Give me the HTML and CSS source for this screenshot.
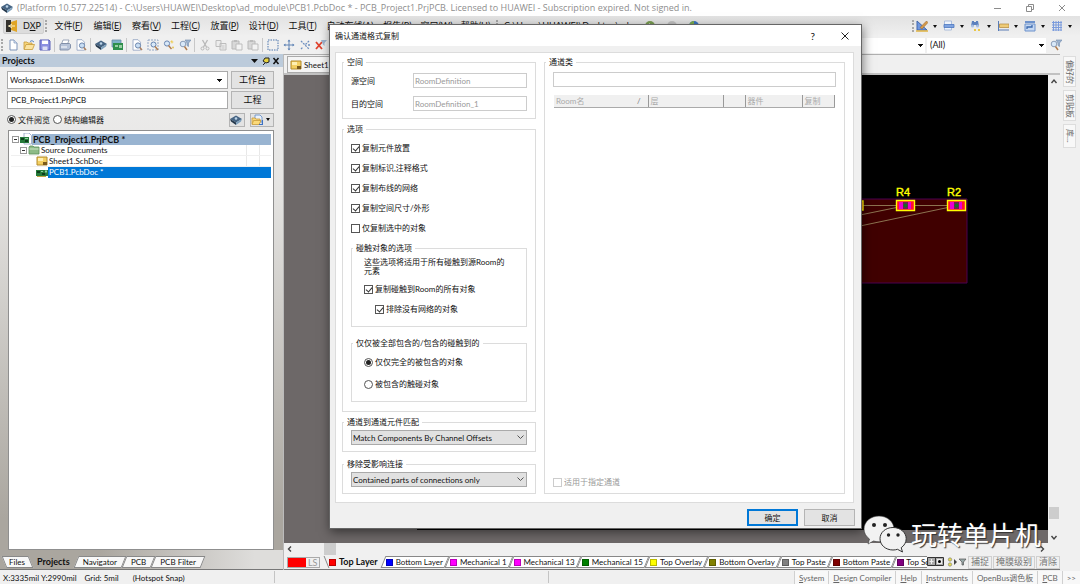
FILE: index.html
```
<!DOCTYPE html>
<html lang="zh-CN">
<head>
<meta charset="utf-8">
<title>PCB_Project1.PrjPCB</title>
<link rel="stylesheet" href="styles.css">
</head>
<body>
<svg class="defs" aria-hidden="true">
  <symbol id="i-new" viewBox="0 0 12 12"><path d="M3 1h4l3 3v7H3z" fill="#fff" stroke="#7c93b8"/><path d="M7 1v3h3" fill="#dbe6f5" stroke="#7c93b8" stroke-width=".7"/></symbol>
  <symbol id="i-open" viewBox="0 0 12 12"><path d="M1 10V3h3l1 1h4v2" fill="#f7d67c" stroke="#c79a3a" stroke-width=".8"/><path d="M1 10.500l2-5h8.500l-2 5z" fill="#fbe3a0" stroke="#c79a3a" stroke-width=".8"/><path d="M7 2.500q2-2 4 .5" fill="none" stroke="#5c88c4"/></symbol>
  <symbol id="i-workopen" viewBox="0 0 12 12"><path d="M4 1h5l2 2v5H4z" fill="#eaf1fb" stroke="#5c88c4" stroke-width=".8"/><path d="M1 10V4h3l1 1h4v2" fill="#f7d67c" stroke="#c79a3a" stroke-width=".8"/><path d="M1 10.500l1.500-4H10l-2 4z" fill="#fbd978" stroke="#c79a3a" stroke-width=".8"/><path d="M8 10.500h3.500V6" fill="none" stroke="#3c71c4" stroke-width="1.200"/></symbol>
  <symbol id="i-save" viewBox="0 0 12 12"><path d="M1 1h9l1 1v9H1z" fill="#8a8fe0" stroke="#5a60b8"/><path d="M3 1.500h6v3.500H3z" fill="#fff"/><path d="M3.500 7.500h5V11h-5z" fill="#dcdff5"/></symbol>
  <symbol id="i-print" viewBox="0 0 12 12"><path d="M4 1h6L8.500 5h-6z" fill="#fff" stroke="#8593ab" stroke-width=".8"/><path d="M1 5.500l1.500-1h8l1 1V9l-2 2H1z" fill="#b5c2d8" stroke="#71809c" stroke-width=".8"/><path d="M2 8h6" stroke="#fff"/></symbol>
  <symbol id="i-prev" viewBox="0 0 12 12"><path d="M2 .7h5l2.500 2.500v8H2z" fill="#fff" stroke="#8ea0bf" stroke-width=".8"/><circle cx="7" cy="6.500" r="2.600" fill="#c8ddf3" stroke="#6d87ad"/><path d="M8.800 8.500l2.200 2.500" stroke="#ad8260" stroke-width="1.500"/></symbol>
  <symbol id="i-chip" viewBox="0 0 12 12"><path d="M0 5l6-3.500L12 5 6 8.500z" fill="#466483"/><path d="M0 5l6 3.500V11L1 7.500z" fill="#24384c"/><path d="M6 8.500L12 5l-1 2.500L6 11z" fill="#7fa1bd"/><circle cx="6" cy="4.500" r="1.300" fill="#bcd4e8"/></symbol>
  <symbol id="i-board" viewBox="0 0 12 12"><path d="M1 1h9v7H1z" fill="#7fb3c9" stroke="#6b8aa5" stroke-width=".8"/><path d="M2 4h10v7H2z" fill="#2f8f4c"/><path d="M4 6h3v2H4zM8 6h3v3H8z" fill="#9ad0a4"/></symbol>
  <symbol id="i-zsel" viewBox="0 0 12 12"><path d="M1 1h10v10H1z" fill="none" stroke="#93a6c4" stroke-dasharray="2 1"/><circle cx="6.500" cy="5.500" r="2.500" fill="#d8e8f8" stroke="#6483b0"/><path d="M8 7.500L11 11" stroke="#b07d4f" stroke-width="1.500"/></symbol>
  <symbol id="i-zoom" viewBox="0 0 12 12"><circle cx="4" cy="4.500" r="2.600" fill="#d8e8f8" stroke="#6a87b2"/><path d="M5.500 6.500L8.500 10" stroke="#b07d4f" stroke-width="1.500"/><path d="M9 1l.6 1.400L11 3l-1.400.6L9 5l-.6-1.400L7 3z" fill="#edcd58"/><circle cx="10" cy="8.500" r="1" fill="#e5c557"/></symbol>
  <symbol id="i-filt" viewBox="0 0 12 12"><circle cx="4" cy="5" r="2.800" fill="#d8e8f8" stroke="#8a9db9"/><path d="M5.500 7.500L8 11" stroke="#b07d4f" stroke-width="1.500"/><path d="M6 1h6L9.500 4v3.500L8 6.500V4z" fill="#9eb4cf" stroke="#6e89ad" stroke-width=".6"/></symbol>
  <symbol id="i-cut" viewBox="0 0 12 12"><path d="M3.500 1l4 7M8.500 1l-4 7" stroke="#b8b8b8" stroke-width="1.300"/><circle cx="3.500" cy="9.500" r="1.500" fill="none" stroke="#b8b8b8"/><circle cx="8.500" cy="9.500" r="1.500" fill="none" stroke="#b8b8b8"/></symbol>
  <symbol id="i-copy" viewBox="0 0 12 12"><path d="M1 1.500h5v6H1zM5 4.500h6v6.500H5z" fill="#ececec" stroke="#bdbdbd"/><path d="M6.500 7h3M6.500 9h3" stroke="#c6c6c6"/></symbol>
  <symbol id="i-paste" viewBox="0 0 12 12"><path d="M1 2h7v8H1z" fill="#d8d8d8" stroke="#b8b8b8"/><path d="M3 1h3v2H3z" fill="#bbb"/><path d="M5 5h6v6H5z" fill="#f3f3f3" stroke="#bdbdbd"/></symbol>
  <symbol id="i-marq" viewBox="0 0 12 12"><path d="M1 1h10v10H1z" fill="none" stroke="#4d76ad" stroke-dasharray="1.500 1"/></symbol>
  <symbol id="i-move" viewBox="0 0 12 12"><path d="M6 1v10M1 6h10" stroke="#6285b6"/><path d="M4.500 2.500L6 .5l1.500 2zM4.500 9.500l1.500 2 1.500-2zM2.500 4.500L.5 6l2 1.500zM9.500 4.500l2 1.500-2 1.500z" fill="#6285b6"/></symbol>
  <symbol id="i-wand" viewBox="0 0 12 12"><path d="M2 2l8 8M10 2L6 6M2 10l2-2" stroke="#6d8fc0" stroke-width="1.300" stroke-dasharray="2 1"/><circle cx="10" cy="6" r="1" fill="#6d8fc0"/></symbol>
  <symbol id="i-clear" viewBox="0 0 12 12"><path d="M1 3l6 7M7 3l-6 7" stroke="#e0422e" stroke-width="1.800"/><path d="M6 1h6L9.500 4v3L8 5.500z" fill="#9eb4cf"/></symbol>
  <symbol id="i-sch" viewBox="0 0 12 12"><path d="M1 2h10v8H1z" fill="#f3cf62" stroke="#b38a2b"/><path d="M2 3h5v3H2z" fill="#fff0b2"/><path d="M7 7h4v3H7z" fill="#7a5a1b"/></symbol>
  <symbol id="i-pcb" viewBox="0 0 12 12"><path d="M0 3h12v6H0z" fill="#257a3a"/><path d="M1 4h3v2H1zM6 6h3v2H6z" fill="#0e3d1c"/><path d="M5 4h2v1H5zM9 3.500h2v2H9z" fill="#8dd29c"/><path d="M1 9h9v1H1z" fill="#c0a343"/></symbol>
  <symbol id="i-proj" viewBox="0 0 12 12"><path d="M4 0h5l2.500 2.500V11H4z" fill="#fff" stroke="#8ea0bf" stroke-width=".8"/><path d="M0 4h9v6H0z" fill="#257a3a"/><path d="M1 5h3v2H1zM5 7h3v2H5z" fill="#0e3d1c"/><path d="M5 5h3v1H5z" fill="#8dd29c"/></symbol>
  <symbol id="i-fold" viewBox="0 0 12 12"><path d="M1 3l1-1h3l1 1h5v7H1z" fill="#8dbb87" stroke="#5b8f58" stroke-width=".8"/><path d="M1.500 5h9" stroke="#cfe8c9"/></symbol>
  <symbol id="i-draw" viewBox="0 0 12 12"><path d="M1 1v9h10z" fill="#6f98e0" stroke="#4067ac"/><path d="M4 7.500L10.500 1 12 2.500 6 9z" fill="#d69a4a" stroke="#8e5e25" stroke-width=".5"/><path d="M0 11h12" stroke="#e0b340" stroke-width="1.500"/></symbol>
  <symbol id="i-align" viewBox="0 0 12 12"><path d="M1.500 1h7v9h-7z" fill="#eef3fb" stroke="#9db3d8" stroke-width=".8"/><path d="M1 4.500h10v3H1z" fill="#7ea2e0" stroke="#4a76bf" stroke-width=".8"/></symbol>
  <symbol id="i-find" viewBox="0 0 12 12"><path d="M2 1h2v5H1zM6 1h2l1 5H6zM4 2h2v3H4z" fill="#5c80bd"/><circle cx="2.500" cy="6" r="1.500" fill="#a8c0e4"/><circle cx="7.500" cy="6" r="1.500" fill="#a8c0e4"/><path d="M4 10h2M8 10h2" stroke="#eac747" stroke-width="2"/></symbol>
  <symbol id="i-dim" viewBox="0 0 12 12"><path d="M1.500 1v10M1 10h11" stroke="#5a7db6"/><path d="M2.500 4h9.500v3.500H2.500z" fill="#eecb77" stroke="#b3873a" stroke-width=".7"/></symbol>
  <symbol id="i-room" viewBox="0 0 12 12"><path d="M1 1h10v2H1z" fill="#6d92cc"/><path d="M1 4h10v7H1z" fill="#c5d8f2" stroke="#6d92cc"/><path d="M3 9V7h5V5" stroke="#3a68ae" stroke-width="1.300" fill="none"/></symbol>
  <symbol id="i-grid" viewBox="0 0 12 12"><path d="M2.500 1v10M5 1v10M7.500 1v10M10 1v10M1 2.500h10M1 5h10M1 7.500h10M1 10h10" stroke="#7c9cdc"/></symbol>
</svg>

<div class="app">
  <header class="titlebar">
    <svg class="ic"><use href="#i-chip"/></svg>
    <span class="caption">(Platform 10.577.22514) - C:\Users\HUAWEI\Desktop\ad_module\PCB1.PcbDoc * - PCB_Project1.PrjPCB. Licensed to HUAWEI - Subscription expired. Not signed in.</span>
    <svg class="winctl" viewBox="0 0 74 10"><path d="M1 5.500h7M33.500 3.500h5v5h-5zM35.500 3V1.500h5v5H39M66 2l6 6M72 2l-6 6" fill="none" stroke="#8c8c8c"/></svg>
  </header>

  <nav class="menubar">
    <button class="dxp"><svg viewBox="0 0 12 12"><path d="M0 0h5v12H0z" fill="#34322e"/><path d="M5 2l6-2v12L5 10z" fill="#e0a526"/><path d="M2 6h7M6 4l-3 2 3 2" stroke="#fff3c4" fill="none"/></svg><span>D<u>X</u>P</span></button>
    <i class="grip"></i>
    <button>文件(<u>F</u>)</button><button>编辑(<u>E</u>)</button><button>察看(<u>V</u>)</button><button>工程(<u>C</u>)</button><button>放置(<u>P</u>)</button><button>设计(<u>D</u>)</button><button>工具(<u>T</u>)</button><button class="wide">自动布线(<u>A</u>)</button><button>报告(<u>R</u>)</button><button>窗口(<u>W</u>)</button><button>帮助(<u>H</u>)</button>
    <i class="grip"></i>
    <span class="path">C:\Users\HUAWEI\Desktop\ad</span>
    <svg class="navs" viewBox="0 0 56 12"><circle cx="6" cy="6" r="5" fill="#7b9f53"/><path d="M3 6l3-3v6z" fill="#fff"/><circle cx="28" cy="6" r="5" fill="#c4c4c4"/><circle cx="50" cy="6" r="5" fill="#3b76c2"/><path d="M45 6a5 5 0 0 1 5-5v5z" fill="#7fb04f"/></svg>
    <div class="tools-right">
      <i class="grip"></i>
      <button class="drop"><svg class="ic"><use href="#i-draw"/></svg></button><button class="drop"><svg class="ic"><use href="#i-align"/></svg></button><button class="drop"><svg class="ic"><use href="#i-find"/></svg></button><button class="drop"><svg class="ic"><use href="#i-dim"/></svg></button><button class="drop"><svg class="ic"><use href="#i-room"/></svg></button><button class="drop"><svg class="ic"><use href="#i-grid"/></svg></button>
    </div>
  </nav>

  <div class="toolbar">
    <i class="grip"></i>
    <button><svg class="ic"><use href="#i-new"/></svg></button><button><svg class="ic"><use href="#i-open"/></svg></button><button><svg class="ic"><use href="#i-save"/></svg></button><i class="sep"></i>
    <button><svg class="ic"><use href="#i-print"/></svg></button><button><svg class="ic"><use href="#i-prev"/></svg></button><i class="sep"></i>
    <button><svg class="ic"><use href="#i-chip"/></svg></button><button><svg class="ic"><use href="#i-board"/></svg></button><i class="sep"></i>
    <button><svg class="ic"><use href="#i-prev"/></svg></button><button><svg class="ic"><use href="#i-zsel"/></svg></button><button><svg class="ic"><use href="#i-zoom"/></svg></button><button><svg class="ic"><use href="#i-filt"/></svg></button><i class="sep"></i>
    <button><svg class="ic"><use href="#i-cut"/></svg></button><button><svg class="ic"><use href="#i-copy"/></svg></button><button><svg class="ic"><use href="#i-paste"/></svg></button><button><svg class="ic"><use href="#i-paste"/></svg></button><i class="sep"></i>
    <button><svg class="ic"><use href="#i-marq"/></svg></button><button><svg class="ic"><use href="#i-move"/></svg></button><button><svg class="ic"><use href="#i-wand"/></svg></button><button><svg class="ic"><use href="#i-clear"/></svg></button>
    <div class="filters">
      <select class="combo flat" aria-label="Filter"><option></option></select>
      <select class="combo flat" aria-label="Mask"><option>(All)</option></select>
      <button><svg class="ic"><use href="#i-filt"/></svg></button>
    </div>
  </div>

  <div class="main">
    <aside class="panel">
      <h2>Projects<svg viewBox="0 0 30 10"><path d="M1 3h7L4.500 7z" fill="#111"/><path d="M13 5l2-3h4v4l-3 1zM15 7l-2 2" fill="#e6d23c" stroke="#222"/><path d="M23.500 2l5 6M28.500 2l-5 6" stroke="#111" stroke-width="1.500"/></svg></h2>
      <div class="panel-body">
        <div class="ws">
          <select class="combo" aria-label="Workspace"><option>Workspace1.DsnWrk</option></select><button class="btn">工作台</button>
          <input type="text" aria-label="Project" value="PCB_Project1.PrjPCB"><button class="btn">工程</button>
        </div>
        <div class="views">
          <label><input type="radio" name="view" checked>文件阅览</label>
          <label><input type="radio" name="view">结构编辑器</label>
          <button class="btn mini"><svg class="ic"><use href="#i-chip"/></svg></button>
          <button class="btn mini drop"><svg class="ic"><use href="#i-workopen"/></svg></button>
        </div>
        <ul class="tree">
          <li class="l0"><i class="exp"></i><svg class="ic"><use href="#i-proj"/></svg><b>PCB_Project1.PrjPCB *</b></li>
          <li class="l1 cols"><i class="exp"></i><svg class="ic"><use href="#i-fold"/></svg><span>Source Documents</span></li>
          <li class="l2 cols"><svg class="ic"><use href="#i-sch"/></svg><span>Sheet1.SchDoc</span></li>
          <li class="l2 sel"><svg class="ic"><use href="#i-pcb"/></svg><span>PCB1.PcbDoc *</span></li>
        </ul>
      </div>
      <div class="ptabs"><button class="back">Files</button><button class="on">Projects</button><button>Navigator</button><button>PCB</button><button>PCB Filter</button></div>
    </aside>

    <section class="editor">
      <div class="doctabs"><button><svg class="ic"><use href="#i-sch"/></svg>Sheet1</button></div>
      <div class="work">
        <div class="canvas">
          <div class="sheet"></div>
          <svg class="board" viewBox="0 0 188 230">
            <path d="M0 124h107v84H0z" fill="#400000" stroke="#4a0050"/>
            <path d="M0 130.500h97M0 140l44-9M0 151l95-20" stroke="#8c7350" fill="none"/>
            <g fill="#ff1030" stroke="#ffff00" stroke-width="1.400"><path d="M-8 126h11v9H-8zM36.500 125.500h18v10h-18zM87.500 125.500h18v10h-18z"/></g>
            <path d="M39 127h4v7h-4zM48 127h3v7h-3zM90 127h4v7h-4zM99 127h3v7h-3z" fill="#e800d0"/>
            <path d="M43 127h5v7h-5zM94 127h5v7h-5z" fill="#6a2050"/><circle cx="45.500" cy="130.500" r="2" fill="#107020"/><circle cx="96.500" cy="130.500" r="2" fill="#107020"/>
            <text x="36" y="121">R4</text><text x="87" y="121">R2</text>
          </svg>
        </div>
        <div class="vscroll"><svg viewBox="0 0 12 12"><path d="M3.500 8L6 5l2.500 3" fill="none" stroke="#444" stroke-width="1.400"/></svg><i></i><svg viewBox="0 0 12 12"><path d="M3.500 5L6 8l2.500-3" fill="none" stroke="#444" stroke-width="1.400"/></svg></div>
      </div>
      <div class="hscroll"><svg viewBox="0 0 12 12"><path d="M7 3.500L4.500 6 7 8.500" fill="none" stroke="#444" stroke-width="1.400"/></svg><i></i><svg class="end" viewBox="0 0 12 12"><path d="M5 3.500L7.500 6 5 8.500" fill="none" stroke="#444" stroke-width="1.400"/></svg></div>
      <div class="layers">
        <span class="ls"><i></i>LS</span>
        <div class="ltabs">
          <button class="on"><i class="red"></i>Top Layer</button><button><i class="blue"></i>Bottom Layer</button><button><i class="mag"></i>Mechanical 1</button><button><i class="mag"></i>Mechanical 13</button><button><i class="green"></i>Mechanical 15</button><button><i class="yellow"></i>Top Overlay</button><button><i class="olive"></i>Bottom Overlay</button><button><i class="gray"></i>Top Paste</button><button><i class="maroon"></i>Bottom Paste</button><button><i class="purple"></i>Top So</button>
        </div>
        <svg class="lnav" viewBox="0 0 40 12"><path d="M.5 1.500h8v8h-8zM8.500 1.500h8v8h-8z" fill="#aaa" stroke="#333"/><path d="M4.500 3v5M2.500 5.500h4" stroke="#eee"/><path d="M10 3h5v5h-5z" fill="#eee"/><circle cx="12.500" cy="5.500" r="1.500"/><circle cx="23" cy="3.500" r="1.700" fill="#e8dc4c" stroke="#777" stroke-width=".6"/><circle cx="23" cy="8.500" r="1.700" fill="#e8dc4c" stroke="#777" stroke-width=".6"/><path d="M27 3l3 3-3 3z" fill="#444"/><path d="M32 3h7l-2.500 3v3h-1.500V6z" fill="#9aa" stroke="#555" stroke-width=".7"/></svg>
        <button class="lbtn">捕捉</button><button class="lbtn">掩膜级别</button><button class="lbtn">清除</button>
      </div>
    </section>

    <aside class="side"><button>偏好的</button><button>剪贴板</button><button>库...</button></aside>
  </div>

  <footer class="status">
    <div class="coords"><span>X:3335mil Y:2990mil</span><span>Grid: 5mil</span><span>(Hotspot Snap)</span></div>
    <div class="hint"></div>
    <div class="sbtns"><button><u>S</u>ystem</button><button><u>D</u>esign Compiler</button><button><u>H</u>elp</button><button><u>I</u>nstruments</button><button>OpenBus调色板</button><button><u>P</u>CB</button><button>&gt;&gt;</button></div>
  </footer>
</div>

<div class="dialog" role="dialog" aria-labelledby="dlg-title">
  <header><span id="dlg-title">确认通道格式复制</span><button class="help">?</button><button aria-label="Close"><svg viewBox="0 0 8 8"><path d="M.5.500l7 7M7.500.500l-7 7" stroke="#222" fill="none"/></svg></button></header>
  <div class="pane">
    <div class="left">
      <fieldset class="rooms"><legend>空间</legend>
        <label for="src">源空间</label><input id="src" type="text" value="RoomDefinition" disabled>
        <label for="dst">目的空间</label><input id="dst" type="text" value="RoomDefinition_1" disabled>
      </fieldset>
      <fieldset class="opts"><legend>选项</legend>
        <label class="row"><input type="checkbox" checked>复制元件放置</label>
        <label class="row"><input type="checkbox" checked>复制标识,注释格式</label>
        <label class="row"><input type="checkbox" checked>复制布线的网络</label>
        <label class="row"><input type="checkbox" checked>复制空间尺寸/外形</label>
        <label class="row"><input type="checkbox">仅复制选中的对象</label>
        <fieldset class="touch"><legend>碰触对象的选项</legend>
          <p>这些选项将适用于所有碰触到源Room的元素</p>
          <label class="row"><input type="checkbox" checked>复制碰触到Room的所有对象</label>
          <label class="row sub"><input type="checkbox" checked>排除没有网络的对象</label>
        </fieldset>
        <fieldset class="within"><legend>仅仅被全部包含的/包含的碰触到的</legend>
          <label class="row"><input type="radio" name="within" checked>仅仅完全的被包含的对象</label>
          <label class="row"><input type="radio" name="within">被包含的触碰对象</label>
        </fieldset>
      </fieldset>
      <fieldset class="pick"><legend>通道到通道元件匹配</legend>
        <select aria-label="通道到通道元件匹配"><option>Match Components By Channel Offsets</option></select>
      </fieldset>
      <fieldset class="pick"><legend>移除受影响连接</legend>
        <select aria-label="移除受影响连接"><option>Contained parts of connections only</option></select>
      </fieldset>
    </div>
    <fieldset class="classes"><legend>通道类</legend>
      <input type="text" aria-label="通道类">
      <table><thead><tr><th class="c1">Room名<span>/</span></th><th class="c2">层</th><th class="c3"></th><th class="c4">器件</th><th class="c5">复制</th></tr></thead></table>
      <label class="row off"><input type="checkbox" disabled>适用于指定通道</label>
    </fieldset>
  </div>
  <div class="actions"><button class="btn ok">确定</button><button class="btn">取消</button></div>
</div>

<div class="mark">
  <svg viewBox="0 0 44 38"><path d="M16 1C7.500 1 1 6.800 1 14c0 4 2 7.500 5.500 10L5 29l5.500-3q2.500.8 5.500.8C24.500 26.800 31 21 31 14S24.500 1 16 1z" fill="#f2f2f2" stroke="#333" stroke-width=".6"/><circle cx="11" cy="10" r="2" fill="#222"/><circle cx="22" cy="10" r="2" fill="#222"/><path d="M30 12.500c-7.500 0-13 5-13 11.200S22.500 35 30 35q2.500 0 4.500-.7L39.500 37l-1.300-4.300c3-2 5-5.300 5-9C43.200 17.500 37.500 12.500 30 12.500z" fill="#f2f2f2" stroke="#333"/><circle cx="25.500" cy="20" r="1.700" fill="#222"/><circle cx="35" cy="20" r="1.700" fill="#222"/></svg>
  <span>玩转单片机</span>
</div>
</body>
</html>
```
FILE: styles.css
```
* { box-sizing: border-box; }
body {
  margin: 0;
  overflow: hidden;
  font: 8px/10px Lato, "Noto Sans CJK SC", sans-serif;
  color: #111;
  background: #f0f0f0;
}
button, input, select { font: inherit; color: inherit; margin: 0; padding: 0; border: 0; background: none; }
button { white-space: nowrap; }
.defs { position: absolute; width: 0; height: 0; }
.ic { width: 12px; height: 12px; flex: none; display: block; }
.app { display: flex; flex-direction: column; height: 100vh; }

.titlebar { display: flex; align-items: center; height: 16px; padding: 0 13px 0 1px; gap: 4px; background: #fff; color: #8e8e8e; }
.caption { flex: 1; font: 9px/16px "Open Sans", "Noto Sans", sans-serif; white-space: nowrap; }
.winctl { width: 74px; height: 10px; }

.menubar { display: flex; align-items: center; height: 20px; padding: 0 2px 0 3px; font-size: 9px; background: linear-gradient(#e2e2e2, #f0f0f0); }
.menubar > button { width: 39px; text-align: center; }
.menubar > .wide { width: 56px; }
.menubar > .dxp { display: flex; align-items: center; justify-content: center; gap: 5px; width: 41px; height: 16px; border: 1px solid #cfcfcf; border-radius: 2px; background: #dcdcdc; }
.dxp svg { flex: none; width: 12px; height: 12px; }
.grip { width: 3px; height: 12px; margin: 0 1px; border-left: 2px dotted #a8a8a8; }
.path { padding-left: 4px; width: 144px; white-space: nowrap; }
.navs { width: 56px; height: 12px; }
.tools-right { display: flex; margin-left: auto; align-items: center; }
.drop { display: flex; align-items: center; }
.drop::after { content: ""; border: 2px solid transparent; border-top: 3px solid #111; border-bottom: 0; margin: 0 5px; }
.tools-right .drop { width: 27px; }

.toolbar { display: flex; align-items: center; height: 18px; background: #f0f0f0; }
.toolbar button { width: 16px; display: flex; justify-content: center; }
.sep { width: 1px; height: 14px; background: #c8c8c8; margin: 0 2px 0 1px; }
.filters { display: flex; align-items: center; gap: 2px; margin-left: auto; padding-right: 16px; }
.combo { appearance: none; height: 18px; padding: 0 4px; border: 1px solid #aaa; border-radius: 0; background: linear-gradient(#111, #111) no-repeat right 5px top 7px / 5px 1px, linear-gradient(#111, #111) no-repeat right 6px top 8px / 3px 1px, linear-gradient(#111, #111) no-repeat right 7px top 9px / 1px 1px, #fff; }
.combo.flat { width: 119px; height: 15px; padding: 0 3px; border: 0; font-size: 9px; background-position: right 2px top 6px, right 3px top 7px, right 4px top 8px, 0 0; }

.main { display: flex; flex: 1; min-height: 0; }
.panel { display: flex; flex-direction: column; width: 284px; border-right: 1px solid #bbb; background: linear-gradient(#efefef 0%, #e6e5e3 25%, #aaa69f 90%); }
.panel h2 { display: flex; align-items: center; justify-content: space-between; margin: 0; height: 13px; padding: 0 3px 0 2px; font-size: 9px; background: #bccbdb; }
.panel h2 svg { width: 30px; height: 10px; }
.panel-body { display: flex; flex-direction: column; flex: 1; padding: 4px 9px 0 7px; }
.ws { display: grid; grid-template-columns: 1fr 43px; gap: 2px 3px; }
.ws .combo { padding: 0 2px; }
.ws > input { height: 18px; border: 1px solid #aaa; padding: 0 3px; background: #fff; min-width: 0; }
.btn { border: 1px solid #b4b4b4; background: #e3e3e3; text-align: center; }
.ws .btn { font-size: 9px; }
.views { display: flex; align-items: center; gap: 3px; height: 21px; }
.views label { display: flex; align-items: center; gap: 2px; white-space: nowrap; }
.mini { height: 14px; width: 16px; }
.views label + .mini { margin-left: auto; }
.mini.drop { width: 24px; margin-left: 2px; }
.mini.drop::after { margin: 0 3px; }
.tree { flex: 1; list-style: none; margin: 0 0 0 1px; padding: 2px; border: 1px solid #8f8f8f; background: #fff; }
.tree li { display: flex; align-items: center; height: 11px; }
.tree span, .tree b { flex: 1; height: 11px; line-height: 11px; padding-left: 1px; }
.tree .l0 { padding-left: 1px; height: 12px; }
.l0 b { font-size: 9px; background: #99b4d1; }
.tree .l1 { padding-left: 9px; }
.tree .l2 { padding-left: 25px; }
.tree .sel span { padding-left: 1px; background: #0078d7; color: #fff; }
.tree .cols { background: linear-gradient(#e8e8e8, #e8e8e8) no-repeat right 24px top / 1px 100%, linear-gradient(#e8e8e8, #e8e8e8) no-repeat right 11px top / 1px 100%; border-bottom: 1px solid #f0f0f0; }
.exp { width: 7px; height: 7px; margin-right: 1px; border: 1px solid #999; background: linear-gradient(#333, #333) no-repeat center / 3px 1px; }
.ptabs { display: flex; align-items: center; height: 20px; padding: 4px 0 0 4px; background: linear-gradient(90deg, #aaa69f 35%, #dedddb 90%); border-bottom: 1px solid #777; }
.ptabs button, .ltabs button { position: relative; z-index: 0; height: 12px; padding: 0 7px; }
.ptabs button::before, .ltabs button::before { content: ""; position: absolute; inset: 0; z-index: -1; background: #f8f8f8; border: 1px solid #888; transform: skewX(-22deg); }
.ptabs .back::before { transform: skewX(22deg); }
.ptabs .on::before { display: none; }
.ptabs .back { padding: 0 6px 0 5px; }
.ptabs .on { padding: 0 6px; }
.ptabs .on, .ltabs .on { font-weight: bold; font-size: 9px; }

.editor { display: flex; flex-direction: column; flex: 1; min-width: 0; border-top: 1px solid #b0b0b0; }
.doctabs { height: 20px; padding: 1px 3px; border-bottom: 2px solid #c2c2c2; }
.doctabs button { display: flex; align-items: center; gap: 2px; height: 17px; padding: 0 2px; border: 1px solid #aaa; background: #f5f5f5; }
.work { display: flex; flex: 1; min-height: 0; }
.canvas { position: relative; flex: 1; overflow: hidden; background: #6d6868; }
.sheet { position: absolute; inset: 0 0 13px 133px; background: #000; }
.board { position: absolute; top: 0; right: 0; width: 188px; height: 230px; }
.board text { font: 11px "Liberation Sans", sans-serif; fill: #ffff00; stroke: #ffff00; stroke-width: .4px; }
.vscroll { display: flex; flex-direction: column; width: 12px; }
.vscroll svg, .hscroll svg { width: 12px; height: 12px; }
.vscroll i { height: 12px; margin: auto 0 12px 1px; width: 10px; background: #cdcdcd; }
.hscroll { display: flex; height: 12px; background: #f0f0f0; }
.hscroll i { width: 12px; margin-left: 28px; background: #cdcdcd; }
.hscroll .end { margin-left: auto; margin-right: 12px; }
.layers { display: flex; align-items: center; height: 15px; padding-left: 3px; border-bottom: 1px solid #777; }
.ls { display: flex; height: 11px; width: 33px; border: 1px solid #aaa; color: #999; font-size: 9px; }
.ls i { width: 18px; margin-right: 2px; background: #f00; }
.ltabs { display: flex; flex: 1; min-width: 0; overflow: hidden; padding-left: 6px; }
.ltabs button { display: flex; align-items: center; gap: 3px; padding: 0 4px 0 3px; flex: none; }
.ltabs button::before { background: #fff; }
.ltabs .on { padding-right: 5px; }
.ltabs button:last-child { gap: 2px; padding-right: 0; }
.ltabs .on::before { transform: skewX(22deg); background: none; border-width: 0 0 0 1px; }
.ltabs i { width: 7px; height: 7px; border: 1px solid #0004; }
.red { background: #f00; }
.blue { background: #00f; }
.mag { background: #f0f; }
.green { background: #008000; }
.yellow { background: #ff0; }
.olive { background: #808000; }
.gray { background: #808080; }
.maroon { background: #800000; }
.purple { background: #800080; }
.lnav { flex: none; width: 40px; height: 12px; }
.lbtn { height: 13px; padding: 0 2px; margin-left: 1px; border: 1px solid #d0d0d0; color: #777; font-size: 9px; }

.side { display: flex; flex-direction: column; gap: 3px; width: 20px; padding: 2px 4px 0 3px; }
.side button { writing-mode: vertical-rl; text-orientation: sideways; width: 13px; height: 31px; padding: 2px 0; border: 1px solid #ddd; background: #f8f8f8; color: #666; line-height: 11px; }
.side button:last-child { height: 24px; }

.status { display: flex; height: 14px; align-items: center; white-space: nowrap; }
.coords { display: flex; gap: 8px; width: 274px; padding: 2px 0 0 3px; }
.coords span:last-child { padding-left: 6px; }
.hint { width: 275px; height: 12px; border: 1px solid #c4c4c4; border-width: 0 1px; }
.sbtns { display: flex; margin-left: auto; height: 13px; color: #666; }
.sbtns button { padding: 2px 4px 0; border-left: 1px solid #d0d0d0; background: #f8f8f8; }

.dialog { position: absolute; left: 329px; top: 24px; width: 533px; display: flex; flex-direction: column; border: 1px solid #666; background: #f0f0f0; box-shadow: 1px 3px 10px rgba(0, 0, 0, .5); }
.dialog > header { display: flex; align-items: center; height: 21px; padding: 0 12px 0 5px; background: #fff; }
.dialog > header span { flex: 1; }
.dialog > header svg { width: 8px; height: 8px; display: block; }
.dialog .help { font-size: 10px; margin-right: 26px; }
.pane { display: flex; gap: 8px; margin: 6px 7px 0 5px; padding: 4px 8px 8px 6px; border: 1px solid #dcdcdc; background: #fff; }
.left { width: 194px; }
fieldset { min-width: 0; margin: 0; padding: 0 8px; border: 1px solid #dcdcdc; }
legend { height: 10px; padding: 0 3px; margin-left: -7px; }
.touch legend, .within legend { margin-left: -11px; }
.rooms { display: grid; grid-template-columns: 1fr 114px; align-items: center; gap: 8px 0; padding: 6px 8px 7px; }
.dialog input[type=text] { height: 15px; min-width: 0; border: 1px solid #ccc; padding: 0 1px; color: #999; background: #fff; }
.opts { margin-top: 5px; padding: 4px 8px 9px; }
.row { display: flex; align-items: center; gap: 2px; height: 20px; white-space: nowrap; }
input[type=checkbox], input[type=radio] { appearance: none; position: relative; flex: none; width: 9px; height: 9px; border: 1px solid #555; background: #fff; }
input[type=radio] { border-radius: 50%; }
input[type=checkbox]:checked::after { content: ""; position: absolute; left: 2px; top: 0; width: 3px; height: 5px; border: solid #333; border-width: 0 1px 1px 0; transform: rotate(40deg); }
input[type=radio]:checked::after { content: ""; position: absolute; inset: 1px; border-radius: 50%; background: #222; }
.touch { margin-top: 5px; padding: 5px 12px 7px; }
.touch p { margin: 0 0 3px; padding-right: 5px; line-height: 9px; }
.touch .sub { padding-left: 11px; }
.within { margin-top: 11px; padding: 3px 12px 6px; }
.within .row { height: 22px; }
.pick { margin-top: 5px; padding: 3px 8px 6px; }
.pick select { display: block; appearance: none; width: 100%; height: 15px; padding: 0 1px; border: 1px solid #aaa; border-radius: 0; background: #e1e1e1 url("data:image/svg+xml,%3Csvg xmlns='http://www.w3.org/2000/svg' width='7' height='5'%3E%3Cpath d='M.5.500l3 3 3-3' fill='none' stroke='%23555'/%3E%3C/svg%3E") no-repeat right 2px center; }
.pick + .pick { margin-top: 7px; }
.classes { display: flex; flex-direction: column; flex: 1; padding: 5px 8px; }
.classes table { width: 281px; margin: 8px 0 0 1px; border-collapse: collapse; table-layout: fixed; color: #aaa; background: #f0f0f0; }
.classes th { height: 12px; padding: 0 2px; font-weight: normal; text-align: left; line-height: 10px; border-right: 1px solid #999; border-bottom: 1px solid #aaa; }
.classes th span { float: right; margin-right: 5px; color: #777; }
.c1 { width: 94px; }
.c2 { width: 75px; }
.c3 { width: 22px; }
.c4 { width: 57px; }
.off { color: #999; margin-top: auto; height: 12px; }
.off input { border-color: #ccc; }
.actions { display: flex; justify-content: flex-end; gap: 6px; padding: 6px 6px 2px; }
.actions .btn { width: 51px; height: 17px; }
.actions .ok { border: 2px solid #0078d7; }

.mark { position: absolute; right: 39px; bottom: 31px; display: flex; align-items: center; gap: 4px; color: #fff; font: 26px/36px "Noto Sans CJK SC", sans-serif; text-shadow: 1px 1px 1px #333; }
.mark svg { width: 44px; height: 38px; }
```
